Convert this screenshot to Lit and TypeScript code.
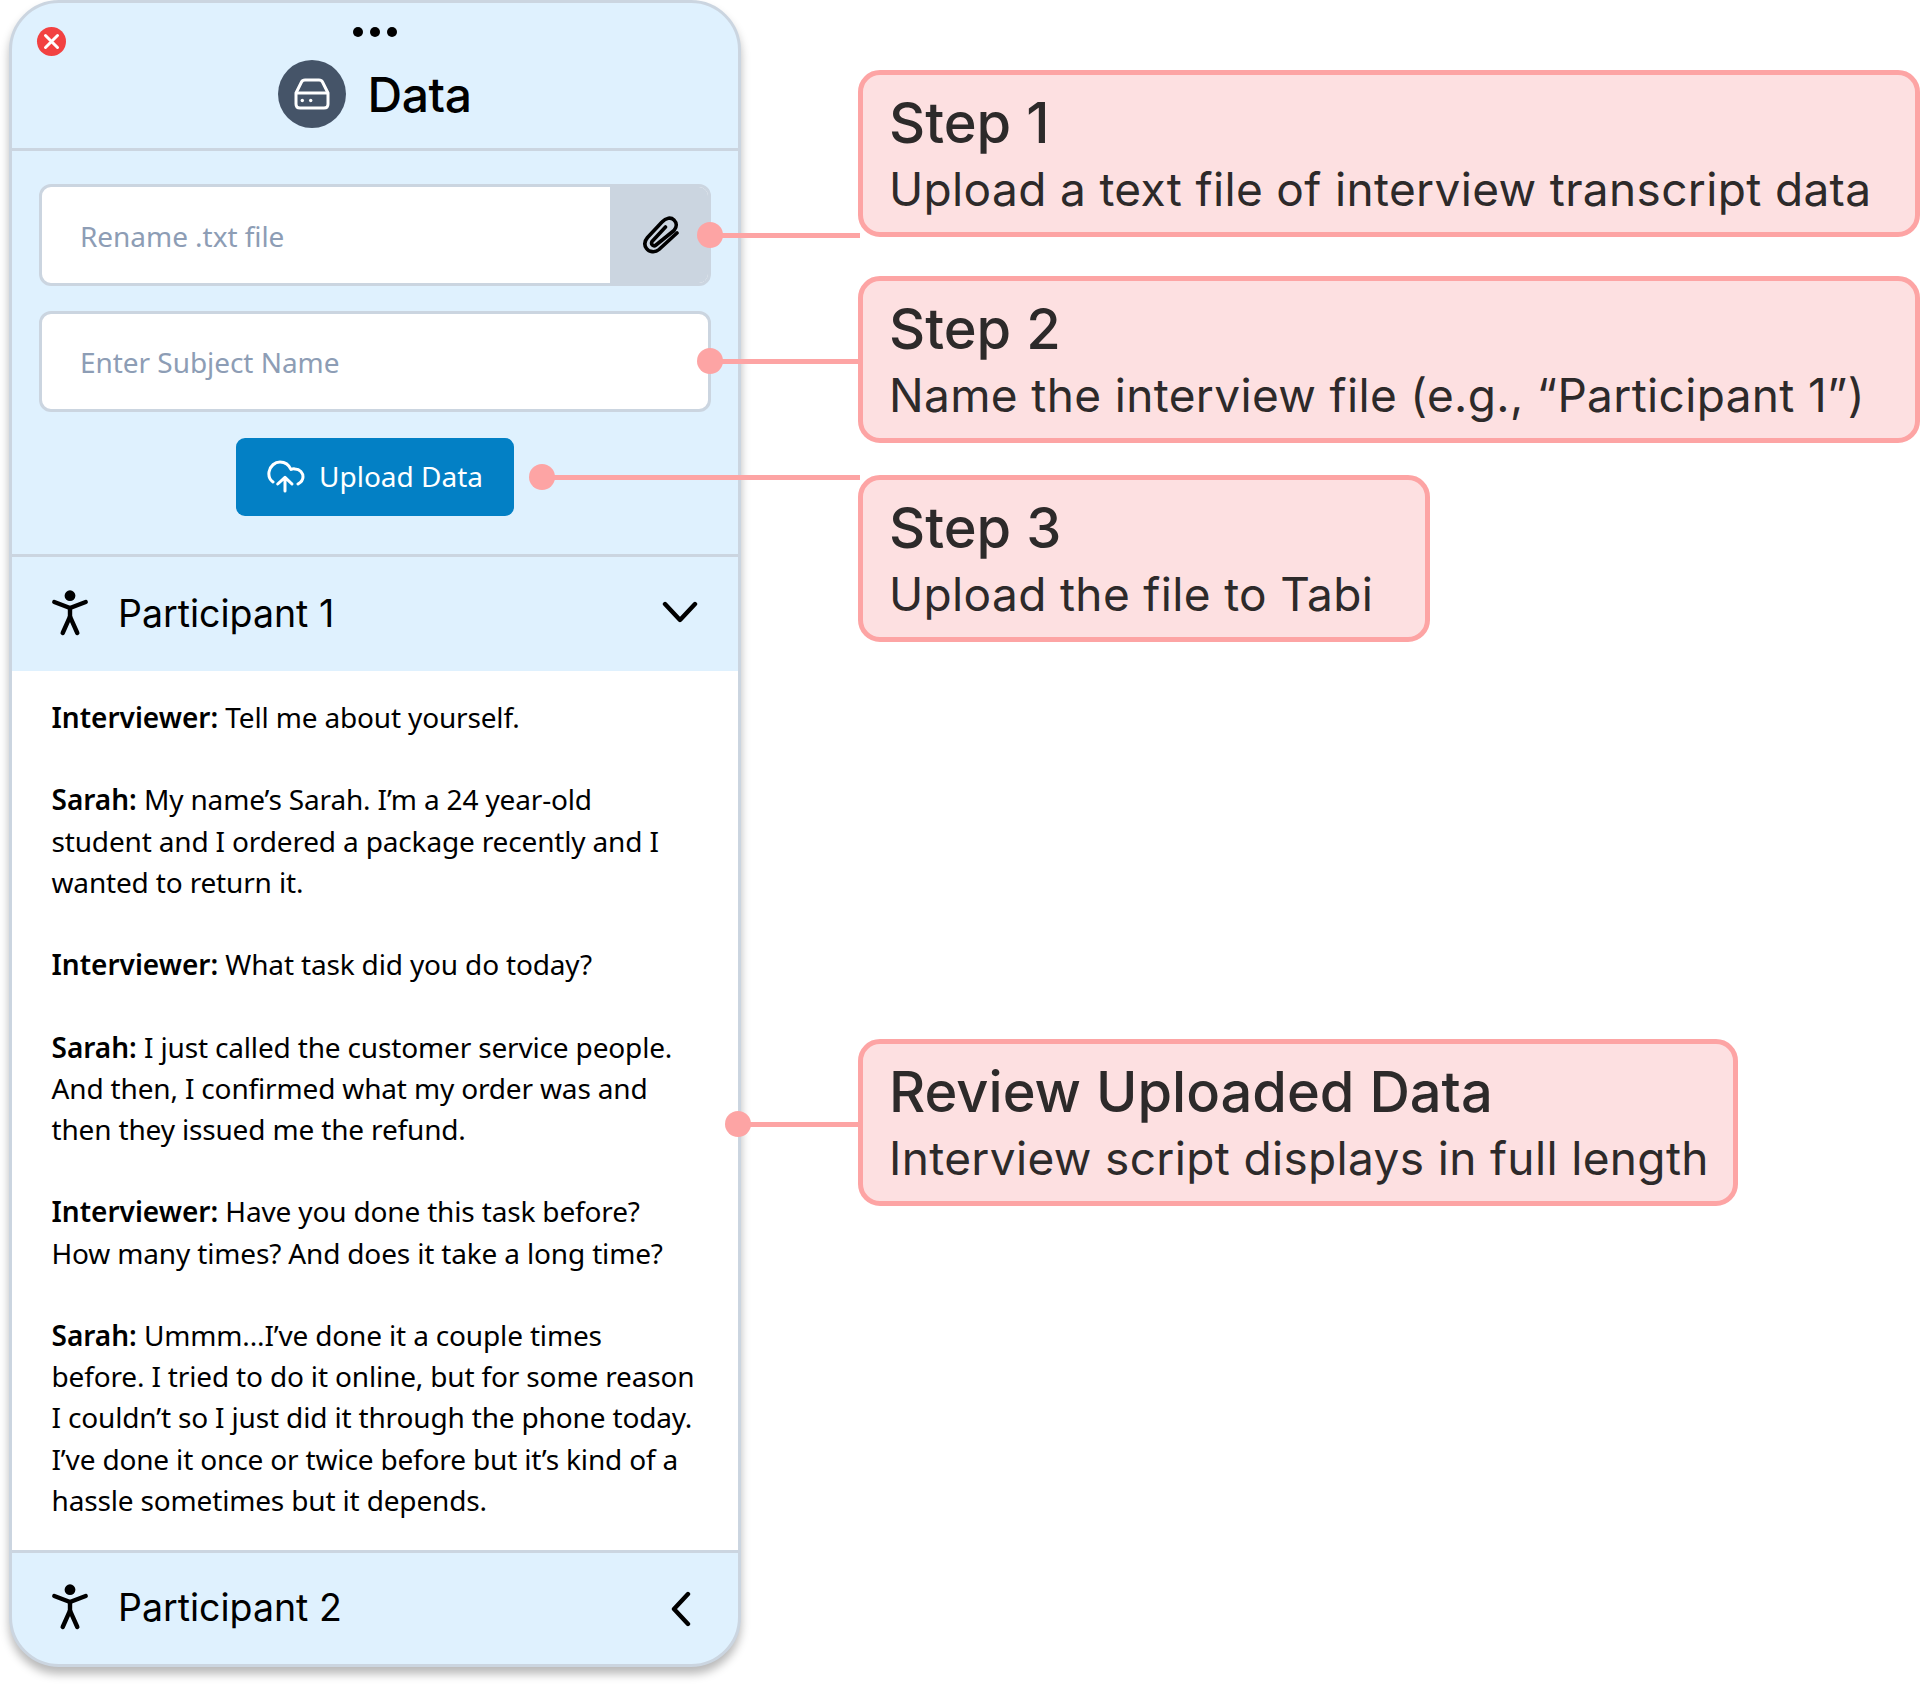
import { LitElement, html, css } from "lit";
import { customElement } from "lit/decorators.js";

const person = html`<svg class="person" viewBox="0 0 40 48" fill="none" stroke="#000" stroke-width="4.4" stroke-linecap="round" stroke-linejoin="round">
  <circle cx="20" cy="7.7" r="5.4" fill="#000" stroke="none"></circle>
  <path d="M4.3 14 L20 20 L35.7 14"></path>
  <path d="M20 20 V28.7"></path>
  <path d="M12.7 45 L20 28.7 L27.3 45"></path>
</svg>`;

const lines: Array<[number, number, number]> = [
  [710, 235, 150],
  [710, 361, 150],
  [542, 477, 318],
  [738, 1124, 121],
];

@customElement("app-root")
export class AppRoot extends LitElement {
  static styles = css`
    :host { display: block; width: 1920px; height: 1688px; position: relative; background: #fff; overflow: hidden; }
    .page { display: flex; align-items: flex-start; padding-left: 9px; }
    .panel {
      width: 732px; height: 1667px; box-sizing: border-box; flex: none;
      border: 3px solid #cbd5e0; border-radius: 50px; overflow: hidden;
      background: #dff1fe; display: flex; flex-direction: column;
      box-shadow: 0 7px 10px rgba(0,0,0,.28);
    }
    .head { height: 148px; flex: none; position: relative; display: flex; justify-content: center; align-items: center; gap: 21px; padding-top: 37px; box-sizing: border-box; border-bottom: 3px solid #cbd5e0; }
    .close { position: absolute; left: 25px; top: 24px; width: 29px; height: 29px; border-radius: 50%; background: #f24141; display: block; }
    .close svg { display: block; }
    .dots { position: absolute; left: 0; right: 0; top: 24px; display: flex; justify-content: center; gap: 7px; }
    .dots i { width: 10px; height: 10px; border-radius: 50%; background: #000; display: block; }
    .badge { width: 68px; height: 68px; border-radius: 50%; background: #455468; display: flex; align-items: center; justify-content: center; }
    .title { font: 500 48px/68px "Inter", "Liberation Sans", sans-serif; color: #000; letter-spacing: -0.4px; padding-top: 2px; }
    .form { height: 406px; flex: none; box-sizing: border-box; border-bottom: 3px solid #cbd5e0; padding: 33px 27px 0; display: flex; flex-direction: column; }
    .field { height: 102px; box-sizing: border-box; border: 3px solid #cbd5e0; border-radius: 12px; background: #fff; display: flex; align-items: stretch; overflow: hidden; flex: none; }
    .field + .field { margin-top: 25px; height: 101px; }
    .ph { flex: 1; display: flex; align-items: center; padding: 2px 0 0 38px; font: 400 28px "Noto Sans", sans-serif; letter-spacing: -0.05px; color: #8d9db5; }
    .field + .field .ph { padding-top: 0; }
    .attach { width: 101px; background: #cbd5e0; display: flex; align-items: center; justify-content: center; margin: -3px -3px -3px 0; }
    .btn { align-self: center; margin-top: 26px; width: 278px; height: 78px; border-radius: 9px; background: #0380c5; color: #fff; display: flex; align-items: center; justify-content: center; gap: 14px; font: 400 28px "Noto Sans", sans-serif; }
    .btn span { padding-bottom: 2px; }
    .acc { height: 114px; flex: none; display: flex; align-items: center; padding: 0 40px 0 38px; font: 400 37.5px "Inter", sans-serif; color: #000; }
    .acc.last { border-top: 3px solid #cbd5e0; flex: 1; height: auto; }
    .person { width: 40px; height: 48px; flex: none; margin: -5px 28px 0 0; }
    .acc .name { flex: 1; padding-bottom: 2px; }
    .down { margin-top: -4px; }
    .left { margin-right: 6px; }
    .body { flex: none; height: 879px; box-sizing: border-box; background: #fff; padding: 26px 30px 0 39.5px; font: 400 28px/41.2px "Noto Sans", sans-serif; letter-spacing: -0.16px; color: #000; white-space: nowrap; }
    .body b { font-weight: 600; letter-spacing: 0; }
    .side { display: flex; flex-direction: column; align-items: flex-start; margin-left: 117px; padding-top: 70px; flex: 1; }
    .call { box-sizing: border-box; height: 167px; border: 5px solid #fda4a4; border-radius: 22px; background: #fde0e1; color: #2d2a2a; padding: 13px 0 0 26px; font-family: "Inter", sans-serif; }
    .call .h { font-size: 56px; line-height: 70px; font-weight: 500; }
    .call .p { font-size: 46px; line-height: 62px; font-weight: 400; letter-spacing: 0.35px; }
    .c1, .c2 { width: 1062px; }
    .c2 { margin-top: 39px; }
    .c3 { width: 572px; margin-top: 32px; }
    .c4 { width: 880px; margin-top: 397px; }
    .line { position: absolute; height: 5px; background: #fda4a4; }
    .dot { position: absolute; width: 26px; height: 26px; border-radius: 50%; background: #fda4a4; }
  `;

  render() {
    return html`
      <div class="page">
        <div class="panel">
          <div class="head">
            <span class="close"><svg width="29" height="29" viewBox="0 0 29 29" fill="none" stroke="#fff" stroke-width="3" stroke-linecap="round"><path d="M8.5 8.5 20.5 20.5M20.5 8.5 8.5 20.5"></path></svg></span>
            <div class="dots"><i></i><i></i><i></i></div>
            <div class="badge">
              <svg width="36" height="32" viewBox="0 0 36 32" fill="none" stroke="#fff" stroke-width="3" stroke-linejoin="round">
                <path d="M2 15 L7.5 4 Q8.5 2 11 2 H25 Q27.5 2 28.5 4 L34 15 V26 Q34 30 30 30 H6 Q2 30 2 26 Z"></path>
                <path d="M2 15 H34"></path>
                <circle cx="8.3" cy="22.5" r="1.7" fill="#fff" stroke="none"></circle>
                <circle cx="16.7" cy="22.5" r="1.7" fill="#fff" stroke="none"></circle>
              </svg>
            </div>
            <div class="title">Data</div>
          </div>
          <div class="form">
            <div class="field">
              <div class="ph">Rename .txt file</div>
              <div class="attach">
                <svg width="38" height="38" viewBox="0 0 36 38" fill="none" stroke="#000" stroke-width="3.6" stroke-linecap="round" stroke-linejoin="round">
                  <path d="M34 17 L16 33.5 C12 37 6 36 3.5 32.5 C1 29 1.5 25 4.5 21.5 L19 6 C23 1.5 28 1 31 4 C34 7 34 11 31 14.5 L13 29 C10.5 31 7.5 28.5 9 25.5 L22.5 11"></path>
                </svg>
              </div>
            </div>
            <div class="field"><div class="ph">Enter Subject Name</div></div>
            <div class="btn">
              <svg width="38" height="34" viewBox="0 0 38 34" fill="none" stroke="#fff" stroke-width="3" stroke-linecap="round" stroke-linejoin="round">
                <path d="M6 22 C2.5 19.5 1.5 15.5 2 12 C3 6 8 2 13 2 C18 2 22 5 24 9.5 C25 9 26.5 8.5 28 9 C33 9 36 13 36 17 C36 20 34.5 22 31 24"></path>
                <path d="M18 31 V18 M10.7 24 L18 17.3 L25 24"></path>
              </svg>
              <span>Upload Data</span>
            </div>
          </div>
          <div class="acc">
            ${person}<span class="name">Participant 1</span>
            <svg class="down" width="36" height="22" viewBox="0 0 36 22" fill="none" stroke="#000" stroke-width="4.4" stroke-linecap="round" stroke-linejoin="round"><path d="M3 3 18 19 33 3"></path></svg>
          </div>
          <div class="body">
            <b>Interviewer:</b> Tell me about yourself.<br><br>
            <b>Sarah:</b> My name’s Sarah. I’m a 24 year-old<br>student and I ordered a package recently and I<br>wanted to return it.<br><br>
            <b>Interviewer:</b> What task did you do today?<br><br>
            <b>Sarah:</b> I just called the customer service people.<br>And then, I confirmed what my order was and<br>then they issued me the refund.<br><br>
            <b>Interviewer:</b> Have you done this task before?<br>How many times? And does it take a long time?<br><br>
            <b>Sarah:</b> Ummm...I’ve done it a couple times<br>before. I tried to do it online, but for some reason<br>I couldn’t so I just did it through the phone today.<br>I’ve done it once or twice before but it’s kind of a<br>hassle sometimes but it depends.
          </div>
          <div class="acc last">
            ${person}<span class="name">Participant 2</span>
            <svg class="left" width="22" height="36" viewBox="0 0 22 36" fill="none" stroke="#000" stroke-width="4.4" stroke-linecap="round" stroke-linejoin="round"><path d="M18 3 4 18 18 33"></path></svg>
          </div>
        </div>
        <div class="side">
          <div class="call c1"><div class="h">Step 1</div><div class="p">Upload a text file of interview transcript data</div></div>
          <div class="call c2"><div class="h">Step 2</div><div class="p">Name the interview file (e.g., “Participant 1”)</div></div>
          <div class="call c3"><div class="h">Step 3</div><div class="p">Upload the file to Tabi</div></div>
          <div class="call c4"><div class="h">Review Uploaded Data</div><div class="p">Interview script displays in full length</div></div>
        </div>
      </div>
      ${lines.map(([x, y, w]) => html`
        <div class="line" style="left:${x}px;top:${y - 2}px;width:${w}px"></div>
        <div class="dot" style="left:${x - 13}px;top:${y - 13}px"></div>`)}
    `;
  }
}
